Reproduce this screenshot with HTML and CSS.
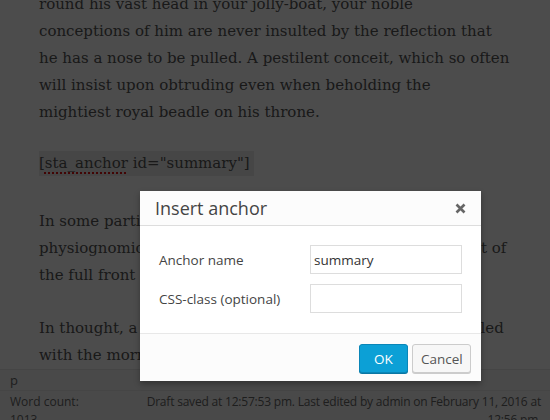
FILE: index.html
```html
<!DOCTYPE html>
<html>
<head>
<meta charset="utf-8">
<link rel="stylesheet" href="styles.css">
</head>
<body>
<div class="screen">
  <div class="editor">
    <div class="content">
      <p>round his vast head in your jolly-boat, your noble<br>conceptions of him are never insulted by the reflection that<br>he has a nose to be pulled. A pestilent conceit, which so often<br>will insist upon obtruding even when beholding the<br>mightiest royal beadle on his throne.</p>
      <p class="sc-para"><span class="shortcode">[<span class="spell">sta_anchor</span> id="summary"]</span></p>
      <p>In some particulars, perhaps the most imposing<br>physiognomical view to be had of the Sperm Whale, is that of<br>the full front of his head. This aspect is sublime.</p>
      <p class="last">In thought, a fine human brow is like the East when troubled<br>with the morning. In the repose of the pasture, the curled<br>brow of the bull has a touch of the grand in it.</p>
    </div>
  </div>
  <div class="statusbar">
    <div class="path">p</div>
    <div class="info">
      <div class="wordcount">Word count: 1013</div>
      <div class="draft">Draft saved at 12:57:53 pm. Last edited by admin on February 11, 2016 at 12:56 pm.</div>
    </div>
  </div>
  <div class="overlay"></div>
  <div class="modal">
    <div class="modal-head">
      <div class="modal-title">Insert anchor</div>
      <button class="close" type="button" aria-label="Close">
        <svg width="11" height="11" viewBox="0 0 11 11"><path d="M1.5 1.5 L9.5 9.5 M9.5 1.5 L1.5 9.5" stroke="#666" stroke-width="2.6" stroke-linecap="butt"/></svg>
      </button>
    </div>
    <div class="modal-body">
      <div class="field">
        <label class="label">Anchor name</label>
        <input class="input" type="text" value="summary">
      </div>
      <div class="field">
        <label class="label">CSS-class (optional)</label>
        <input class="input" type="text" value="">
      </div>
    </div>
    <div class="modal-foot">
      <button class="btn btn-primary" type="button">OK</button>
      <button class="btn btn-cancel" type="button">Cancel</button>
    </div>
  </div>
</div>
</body>
</html>
```
FILE: styles.css
```css
html, body {
  margin: 0;
  padding: 0;
}
body {
  width: 550px;
  height: 420px;
  overflow: hidden;
  font-family: "Open Sans", "Noto Sans", sans-serif;
}
.screen {
  position: relative;
  width: 550px;
  height: 420px;
  overflow: hidden;
  display: flex;
  flex-direction: column;
  background: #fff;
}
.editor {
  height: 369px;
  flex: none;
  overflow: hidden;
  padding: 0 39px;
  background: #fff;
}
.content {
  margin-top: -9px;
  font-family: "DejaVu Serif", serif;
  font-size: 15px;
  color: #555;
}
.content p {
  margin: 0 0 24px;
  line-height: 27px;
  white-space: nowrap;
}
.content p.sc-para {
  margin-bottom: 31px;
}
.content p.last {
  margin-top: 26px;
}
.shortcode {
  background: #ececec;
  padding: 3px 4px 4px 0;
}
.spell {
  text-decoration: underline dotted #d11;
  text-decoration-thickness: 2px;
  text-underline-offset: 4px;
}
.statusbar {
  flex: 1;
  background: #f5f5f5;
  border-top: 1px solid #e8e8e8;
  font-size: 12px;
  color: #666;
}
.path {
  height: 20px;
  line-height: 20px;
  padding-left: 10px;
  font-size: 13px;
  border-bottom: 1px solid #e8e8e8;
}
.info {
  display: flex;
  padding: 2px 9px 0 10px;
  line-height: 18px;
}
.wordcount {
  width: 88px;
  flex: none;
}
.draft {
  flex: 1;
  text-align: right;
  padding-left: 40px;
  letter-spacing: -0.2px;
}
.overlay {
  position: absolute;
  inset: 0;
  background: rgba(0, 0, 0, 0.7);
}
.modal {
  position: absolute;
  left: 140px;
  top: 191px;
  width: 341px;
  height: 190px;
  background: #fff;
  box-shadow: 0 3px 6px rgba(0, 0, 0, 0.3);
  display: flex;
  flex-direction: column;
}
.modal-head {
  height: 34px;
  flex: none;
  display: flex;
  align-items: center;
  justify-content: space-between;
  padding: 0 15px;
  background: #fcfcfc;
  border-bottom: 1px solid #dddddd;
}
.modal-title {
  font-size: 18px;
  font-weight: 500;
  color: #444;
}
.close {
  border: 0;
  background: none;
  padding: 0;
  width: 11px;
  height: 11px;
  display: flex;
}
.modal-body {
  flex: 1;
  display: flex;
  flex-direction: column;
  gap: 10px;
  padding: 19px 19px 0;
}
.field {
  display: flex;
  align-items: center;
  justify-content: space-between;
}
.label {
  font-size: 13.5px;
  color: #444;
}
.input {
  box-sizing: border-box;
  width: 152px;
  height: 29px;
  border: 1px solid #dddddd;
  padding: 0 3px;
  font-family: "Open Sans", sans-serif;
  font-size: 13.5px;
  color: #333;
  margin: 0;
  outline: none;
}
.modal-foot {
  height: 48px;
  flex: none;
  border-top: 1px solid #e8e8e8;
  background: #fcfcfc;
  display: flex;
  align-items: flex-start;
  justify-content: flex-end;
  gap: 4px;
  padding: 10px 10px 0;
  box-sizing: border-box;
}
.btn {
  box-sizing: border-box;
  height: 29px;
  padding: 0 8px;
  border: 1px solid #cccccc;
  border-radius: 3px;
  background: #f7f7f7;
  font-family: "Open Sans", sans-serif;
  font-size: 13.5px;
  color: #555;
  box-shadow: 0 1px 0 #ccc;
}
.btn-cancel {
  width: 59px;
}
.btn-primary {
  width: 49px;
  background: #0ca0d6;
  border-color: #0a86b8;
  color: #fff;
  box-shadow: 0 1px 0 #0a77a3;
}
```
